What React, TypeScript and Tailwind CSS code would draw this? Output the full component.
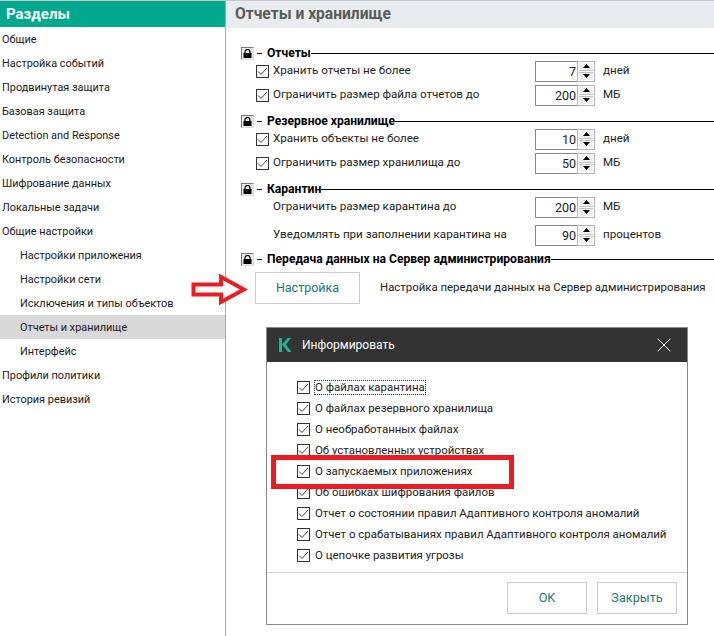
import { X } from "lucide-react";

const font = { fontFamily: 'Roboto, "Noto Sans", sans-serif' };

const menu = [
  { label: "Общие" },
  { label: "Настройка событий" },
  { label: "Продвинутая защита" },
  { label: "Базовая защита" },
  { label: "Detection and Response" },
  { label: "Контроль безопасности" },
  { label: "Шифрование данных" },
  { label: "Локальные задачи" },
  { label: "Общие настройки" },
  { label: "Настройки приложения", sub: true },
  { label: "Настройки сети", sub: true },
  { label: "Исключения и типы объектов", sub: true },
  { label: "Отчеты и хранилище", sub: true, active: true },
  { label: "Интерфейс", sub: true },
  { label: "Профили политики" },
  { label: "История ревизий" },
];

const notify = [
  "О файлах карантина",
  "О файлах резервного хранилища",
  "О необработанных файлах",
  "Об установленных устройствах",
  "О запускаемых приложениях",
  "Об ошибках шифрования файлов",
  "Отчет о состоянии правил Адаптивного контроля аномалий",
  "Отчет о срабатываниях правил Адаптивного контроля аномалий",
  "О цепочке развития угрозы",
];

function Checkbox() {
  return (
    <span className="flex h-[13px] w-[13px] shrink-0 items-center justify-center border border-[#333] bg-white">
      <svg width="11" height="11" viewBox="0 0 11 11">
        <path d="M1 5.500 4 8.500 10 2" fill="none" stroke="#444" strokeWidth="1" />
      </svg>
    </span>
  );
}

function SectionTitle({ title }: { title: string }) {
  return (
    <div className="flex h-[18px] items-center">
      <span className="flex h-[13px] w-[13px] shrink-0 items-center justify-center border border-t-[#777] border-l-[#777] border-r-[#ddd] border-b-[#ddd] bg-[#e8e8e8]">
        <svg width="9" height="9" viewBox="0 0 9 9">
          <path d="M2 4V3a2.500 2.500 0 0 1 5 0v1" fill="none" stroke="#000" strokeWidth="1.2" />
          <rect x="0.5" y="4" width="8" height="5" fill="#000" />
        </svg>
      </span>
      <span className="ml-[3px] h-px w-[5px] bg-black" />
      <span className="ml-[5px] text-[12.1px] font-bold text-black">{title}</span>
      <span className="h-px flex-1 bg-black" />
    </div>
  );
}

function Spinner({ value }: { value: string }) {
  return (
    <div className="flex h-[21px] w-[60px] shrink-0 border border-[#888] bg-white">
      <span className="flex-1 pr-[1px] text-right text-[12.5px] leading-[19px] text-[#222]">{value}</span>
      <div className="-my-px -mr-px flex w-[18px] flex-col gap-px border border-[#b4b4b4] bg-white p-px">
        <span className="flex flex-1 items-center justify-center border-b border-[#c4c4c4] bg-[#f0f0f0]">
          <svg width="7" height="4" viewBox="0 0 7 4"><path d="M3.500 0 7 4H0z" fill="#000" /></svg>
        </span>
        <span className="flex flex-1 items-center justify-center border-t border-[#c4c4c4] bg-[#f0f0f0]">
          <svg width="7" height="4" viewBox="0 0 7 4"><path d="M0 0h7L3.500 4z" fill="#000" /></svg>
        </span>
      </div>
    </div>
  );
}

function Row({ label, value, unit, check = true, cls = "" }: { label: string; value: string; unit: string; check?: boolean; cls?: string }) {
  return (
    <div className={`flex h-[18px] items-center pl-[15px] text-[11.6px] text-[#222] ${cls}`}>
      <span className="w-[17px] shrink-0">{check && <Checkbox />}</span>
      <span className="w-[262px] shrink-0">{label}</span>
      <Spinner value={value} />
      <span className="ml-[8px]">{unit}</span>
    </div>
  );
}

function Btn({ label, cls }: { label: string; cls: string }) {
  return (
    <button className={`flex items-center justify-center border border-[#ccc] bg-white text-[#1b7a78] ${cls}`}>
      {label}
    </button>
  );
}

export default function App() {
  return (
    <div style={font} className="relative flex h-[636px] w-[714px] overflow-hidden border-t border-[#c8c8c8] bg-white">
      <aside className="w-[226px] shrink-0 border-r border-[#a8a8a8]">
        <div className="flex h-[26px] items-center bg-[#00a88e] pl-[6px] text-[15px] font-bold text-white">Разделы</div>
        {menu.map((m) => (
          <div
            key={m.label}
            className={`flex h-6 items-center pt-[2px] text-[10.9px] text-[#1a1a1a] ${m.sub ? "pl-[20px]" : "pl-[2px]"} ${m.active ? "bg-[#d9d9d9]" : ""}`}
          >
            {m.label}
          </div>
        ))}
      </aside>

      <main className="flex-1">
        <div className="flex h-[27px] items-center bg-[#e8ecee] pl-[9px] text-[15.6px] font-bold text-[#595959]">
          Отчеты и хранилище
        </div>
        <div className="pl-[15px] pt-[16px]">
          <SectionTitle title="Отчеты" />
          <Row label="Хранить отчеты не более" value="7" unit="дней" />
          <Row label="Ограничить размер файла отчетов до" value="200" unit="МБ" cls="mt-[6px]" />

          <div className="mt-[8px]"><SectionTitle title="Резервное хранилище" /></div>
          <Row label="Хранить объекты не более" value="10" unit="дней" />
          <Row label="Ограничить размер хранилища до" value="50" unit="МБ" cls="mt-[6px]" />

          <div className="mt-[8px]"><SectionTitle title="Карантин" /></div>
          <Row label="Ограничить размер карантина до" value="200" unit="МБ" check={false} />
          <Row label="Уведомлять при заполнении карантина на" value="90" unit="процентов" check={false} cls="mt-[10px]" />

          <div className="mt-[6px]"><SectionTitle title="Передача данных на Сервер администрирования" /></div>
          <div className="mt-[4px] flex items-center pl-[14px]">
            <Btn label="Настройка" cls="h-[32px] w-[105px] text-[12.5px]" />
            <span className="ml-[20px] whitespace-nowrap text-[11.4px] text-[#222]">Настройка передачи данных на Сервер администрирования</span>
          </div>
        </div>
      </main>

      {/* annotation arrow */}
      <svg className="absolute left-[191px] top-[273px]" width="57" height="31" viewBox="0 0 57 31">
        <path d="M2.500 10.500H30V3l23 12.500L30 28v-7.500H2.500z" fill="#fff" stroke="#ed1c24" strokeWidth="4" />
      </svg>

      {/* dialog */}
      <div className="absolute left-[266px] top-[326px] flex h-[298px] w-[422px] flex-col border border-[#8a8a8a] bg-white">
        <div className="flex h-[34px] shrink-0 items-center bg-[#333] pl-[12px] pr-[11px] text-[12px] text-white">
          <svg width="13" height="14" viewBox="0 0 13 14" className="shrink-0">
            <path d="M0 0h3v14H0zM3 6.500 8.500 0H12L6.800 6.500 12.500 14H9z" fill="#18b795" />
          </svg>
          <span className="ml-[10px] flex-1">Информировать</span>
          <X size={24} strokeWidth={1} className="text-white" />
        </div>
        <div className="flex flex-1 flex-col pl-[30px] pt-[15px] text-[11.45px] text-[#222]">
          {notify.map((n, i) => (
            <div key={n} className="flex h-[21px] items-center gap-[5px]">
              <Checkbox />
              <span className={i === 0 ? "-ml-px h-[15px] border border-dotted border-[#333] leading-[13px]" : ""}>{n}</span>
            </div>
          ))}
        </div>
        <div className="flex h-[52px] shrink-0 items-start justify-end gap-[10px] border-t border-[#d4d4d4] pr-[10px] pt-[9px] text-[12.7px]">
          <Btn label="OK" cls="h-[32px] w-[80px]" />
          <Btn label="Закрыть" cls="h-[32px] w-[80px]" />
        </div>
      </div>

      {/* red highlight */}
      <div className="absolute left-[271px] top-[454px] h-[34px] w-[243px] border-[5px] border-[#ed1c24]" />
    </div>
  );
}
